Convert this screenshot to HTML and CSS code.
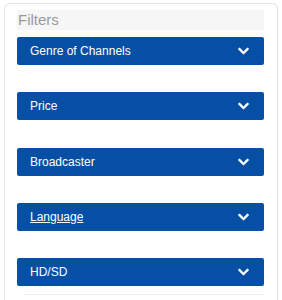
FILE: index.html
```html
<!DOCTYPE html>
<html>
<head>
  <link rel="stylesheet" href="styles.css">
</head>
<body>
  <div class="filters">
    <div class="filters-title">Filters</div>
    <!-- filter groups -->
    <div class="filter-btn">
      <span class="filter-name">Genre of Channels</span>
      <svg class="chevron" viewBox="0 0 448 512"><path d="M207 381L13 187c-9-9-9-25 0-34l23-23c9-9 25-9 34 0L224 285l155-154c9-9 25-9 34 0l23 23c9 9 9 25 0 34L241 381c-9 9-25 9-34 0z"/></svg>
    </div>
    <div class="filter-btn">
      <span class="filter-name">Price</span>
      <svg class="chevron" viewBox="0 0 448 512"><path d="M207 381L13 187c-9-9-9-25 0-34l23-23c9-9 25-9 34 0L224 285l155-154c9-9 25-9 34 0l23 23c9 9 9 25 0 34L241 381c-9 9-25 9-34 0z"/></svg>
    </div>
    <div class="filter-btn">
      <span class="filter-name">Broadcaster</span>
      <svg class="chevron" viewBox="0 0 448 512"><path d="M207 381L13 187c-9-9-9-25 0-34l23-23c9-9 25-9 34 0L224 285l155-154c9-9 25-9 34 0l23 23c9 9 9 25 0 34L241 381c-9 9-25 9-34 0z"/></svg>
    </div>
    <div class="filter-btn">
      <span class="filter-name underline">Language</span>
      <svg class="chevron" viewBox="0 0 448 512"><path d="M207 381L13 187c-9-9-9-25 0-34l23-23c9-9 25-9 34 0L224 285l155-154c9-9 25-9 34 0l23 23c9 9 9 25 0 34L241 381c-9 9-25 9-34 0z"/></svg>
    </div>
    <div class="filter-btn">
      <span class="filter-name">HD/SD</span>
      <svg class="chevron" viewBox="0 0 448 512"><path d="M207 381L13 187c-9-9-9-25 0-34l23-23c9-9 25-9 34 0L224 285l155-154c9-9 25-9 34 0l23 23c9 9 9 25 0 34L241 381c-9 9-25 9-34 0z"/></svg>
    </div>
    <div class="filters-line"></div>
  </div>
</body>
</html>
```

FILE: styles.css
```css
* {
  margin: 0;
  padding: 0;
  box-sizing: border-box;
}

body {
  background-color: white;
  font-family: "Liberation Sans", Arial, sans-serif;
}

.filters {
  width: 274px;
  height: 310px;
  margin: 3px 0 0 4px;
  padding: 6px 13px 0 12px;
  border: 1px solid #e2e2e2;
  border-bottom: none;
  border-radius: 6px 6px 0 0;
}

.filters-title {
  height: 20px;
  line-height: 20px;
  font-size: 15px;
  color: #9a9a9a;
  background-color: #f6f6f6;
  padding-left: 1px;
  margin-bottom: 7px;
}

.filter-btn {
  height: 28px;
  background-color: #0550a5;
  border-radius: 2px;
  display: flex;
  align-items: center;
  justify-content: space-between;
  padding: 0 15px 0 13px;
  margin-bottom: 27.25px;
}

.filter-name {
  font-size: 12px;
  color: white;
}

.underline {
  text-decoration: underline;
}

.chevron {
  width: 11px;
  height: 12px;
  fill: white;
  stroke: white;
  stroke-width: 24;
  stroke-linejoin: round;
}

.filters-line {
  height: 1px;
  background-color: #eeeeee;
  margin: -19px 0 0 6px;
}
```
